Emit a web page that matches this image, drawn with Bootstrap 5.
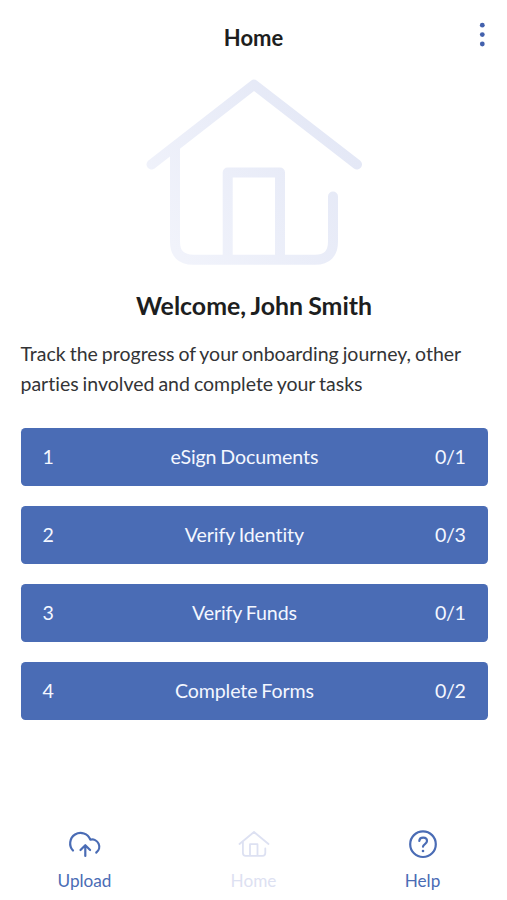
<!DOCTYPE html>
<html lang="en">
<head>
<meta charset="utf-8">
<meta name="viewport" content="width=device-width, initial-scale=1">
<title>Home</title>
<link href="https://cdn.jsdelivr.net/npm/bootstrap@5.3.0/dist/css/bootstrap.min.css" rel="stylesheet">
<style>
  body { font-family: Lato, "Liberation Sans", sans-serif; color: #1d1e20; background: #fff; font-variant-ligatures: none; word-spacing: -1px; }
  .app { height: 900px; overflow: hidden; }
  .app-bar { height: 74px; padding: 0 20px; display: grid; grid-template-columns: 40px 1fr 40px; }
  .app-title { grid-column: 2; font-size: 22px; font-weight: 700; line-height: 75px; }
  .menu-btn { padding: 22px 2px 0 0; line-height: 0; }
  .content { padding: 0 19.5px 0 20.5px; }
  .hero { width: 220px; height: 196px; }
  .welcome { font-size: 24.9px; font-weight: 700; line-height: 30px; margin-top: 20px; }
  .intro { font-size: 19.5px; line-height: 29.4px; margin: 19.3px 0 0; color: #333436; }
  .tasks { margin-top: 29.4px; gap: 19.9px; }
  .task { height: 58.3px; padding: 0 22px; border: 0; border-radius: 4.5px; background: #4a6cb5; color: #f4f7ff; font-size: 19.6px; line-height: 1; font-variant-ligatures: none; word-spacing: -1px; letter-spacing: -.1px; }
  .task:hover { background: #3f60a8; color: #fff; }
  .task .count { letter-spacing: -.4px; }
  .tabs { height: 72px; }
  .tab { color: #4a6cb5; font-size: 17.2px; line-height: 22px; text-decoration: none; gap: 10px; }
  .tab.current { color: #dde1f2; }
</style>
<script src="https://cdn.jsdelivr.net/npm/bootstrap@5.3.0/dist/js/bootstrap.bundle.min.js"></script>
</head>
<body>
<div class="app d-flex flex-column">
  <header class="app-bar">
    <h1 class="app-title text-center mb-0">Home</h1>
    <button class="menu-btn btn border-0 d-flex justify-content-end align-items-start" type="button" aria-label="Menu">
      <svg width="6" height="26" viewBox="0 0 6 26" fill="#4361ad"><circle cx="3.3" cy="3.2" r="2.4"/><circle cx="3.3" cy="12.6" r="2.4"/><circle cx="3.3" cy="22" r="2.4"/></svg>
    </button>
  </header>
  <main class="content">
    <svg class="hero d-block mx-auto" viewBox="144 74 220 196" fill="none" stroke="url(#fade)" stroke-width="10" stroke-linecap="round" stroke-linejoin="round" aria-hidden="true">
      <defs><linearGradient id="fade" gradientUnits="userSpaceOnUse" x1="160" y1="230" x2="320" y2="110"><stop offset="0" stop-color="#f1f3fb"/><stop offset="1" stop-color="#e4e8f6"/></linearGradient></defs>
      <path d="M151.5 164.500 254 84.700l103 79.800M175 148v93.500q0 18.200 18.200 18.200H315q18 0 18-18.200V196.500M227.700 259v-86.500H280V259"/>
    </svg>
    <h2 class="welcome text-center mb-0">Welcome, John Smith</h2>
    <p class="intro">Track the progress of your onboarding journey, other parties involved and complete your tasks</p>
    <div class="tasks d-flex flex-column">
      <button type="button" class="task btn d-flex justify-content-between align-items-center"><span>1</span><span>eSign Documents</span><span class="count">0/1</span></button>
      <button type="button" class="task btn d-flex justify-content-between align-items-center"><span>2</span><span>Verify Identity</span><span class="count">0/3</span></button>
      <button type="button" class="task btn d-flex justify-content-between align-items-center"><span>3</span><span>Verify Funds</span><span class="count">0/1</span></button>
      <button type="button" class="task btn d-flex justify-content-between align-items-center"><span>4</span><span>Complete Forms</span><span class="count">0/2</span></button>
    </div>
  </main>
  <nav class="tabs row gx-0 mt-auto">
    <a href="#" class="tab col d-flex flex-column align-items-center">
      <svg width="34" height="32" viewBox="0 -.5 34 32" fill="none" stroke="currentColor" stroke-width="2.2" stroke-linecap="round" stroke-linejoin="round"><path d="M5 22A10.400 10.400 0 1 1 22.300 11.200A7.200 7.200 0 0 1 28.300 24M17.300 27.500V17M12.500 21.500l4.800-4.800 4.800 4.800"/></svg>
      Upload
    </a>
    <a href="#" class="tab current col d-flex flex-column align-items-center" aria-current="page">
      <svg width="34" height="32" viewBox="0 -.5 34 32" fill="none" stroke="currentColor" stroke-width="1.800" stroke-linecap="round" stroke-linejoin="round"><path d="M2.500 15.500 17 3.500l14.500 12M5.900 13.200V24.500q0 2.800 2.800 2.800h16.800q2.800 0 2.800-2.800V20M13 27V15.700h7.500V27"/></svg>
      Home
    </a>
    <a href="#" class="tab col d-flex flex-column align-items-center">
      <svg width="34" height="32" viewBox="0 -.5 34 32" fill="none" stroke="currentColor" stroke-width="2.200" stroke-linecap="round" stroke-linejoin="round"><circle cx="17" cy="15.700" r="12.800"/><path d="M13.300 12.500c.3-4.500 7.700-4.300 7.700.1 0 3-4 2.900-4 5.600"/><circle cx="17" cy="22.500" r="1.300" fill="currentColor" stroke="none"/></svg>
      Help
    </a>
  </nav>
</div>
</body>
</html>
